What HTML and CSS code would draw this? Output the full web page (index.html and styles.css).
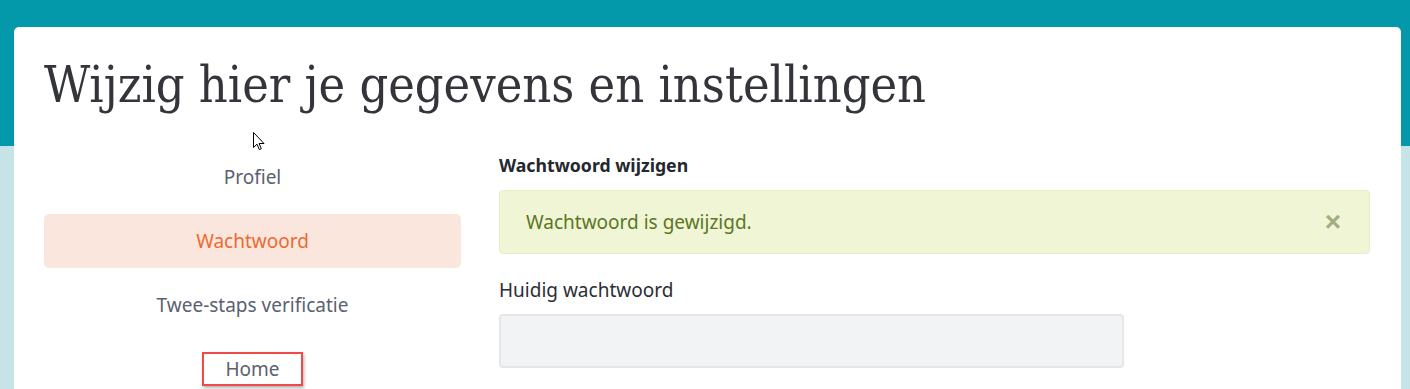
FILE: index.html
```html
<!DOCTYPE html>
<html lang="nl">
<head>
    <meta charset="UTF-8">
    <meta name="viewport" content="width=device-width, initial-scale=1.0">
    <title>Gegevens en instellingen</title>
    <link rel="stylesheet" href="styles.css">
</head>
<body>
    <!-- Kaart met instellingen -->
    <div class="card">
        <h1 class="title">Wijzig hier je gegevens en instellingen</h1>

        <div class="settings">
            <!-- Menu links -->
            <nav class="side-nav">
                <a href="#" class="nav-item">Profiel</a>
                <a href="#" class="nav-item active">Wachtwoord</a>
                <a href="#" class="nav-item">Twee-staps verificatie</a>
                <a href="#" class="nav-item"><span class="marked">Home</span></a>
            </nav>

            <!-- Formulier rechts -->
            <div class="panel">
                <h2 class="panel-title">Wachtwoord wijzigen</h2>
                <div class="alert">
                    <span>Wachtwoord is gewijzigd.</span>
                    <button class="alert-close">&times;</button>
                </div>
                <label class="field-label" for="huidig">Huidig wachtwoord</label>
                <input type="password" id="huidig" class="field-input">
            </div>
        </div>
    </div>

    <!-- Muiscursor -->
    <svg class="cursor" width="12" height="19" viewBox="0 0 12 19">
        <path d="M0.5 0.5 L0.5 15.5 L4 12.2 L6.3 17.6 L8.3 16.7 L6.1 11.5 L11 11.5 Z" fill="#fff" stroke="#000" stroke-width="1"/>
    </svg>
</body>
</html>
```

FILE: styles.css
```css
body {
    margin: 0;
    padding: 0;
    font-family: "Noto Sans", Arial, sans-serif;
    background: linear-gradient(to bottom, #0399aa 0, #0399aa 146px, #c6e3e8 146px);
    min-height: 389px;
    overflow: hidden;
}

.card {
    background-color: white;
    margin: 27px 9px 0 14px;
    padding: 25px 31px 40px 30px;
    border-radius: 5px 5px 0 0;
    min-height: 400px;
}

.title {
    font-family: "DejaVu Serif", "Liberation Serif", serif;
    font-weight: normal;
    font-stretch: condensed;
    font-size: 50px;
    line-height: 67px;
    color: #33353b;
    margin: 0 0 31px 0;
}

.settings {
    display: grid;
    grid-template-columns: 417px 1fr;
    gap: 38px;
}

/* Menu links */
.side-nav {
    display: flex;
    flex-direction: column;
    gap: 10px;
}

.nav-item {
    height: 54px;
    display: flex;
    align-items: center;
    justify-content: center;
    border-radius: 5px;
    color: #5a6170;
    font-size: 19px;
    text-decoration: none;
}

.nav-item.active {
    background-color: #fbe6dd;
    color: #ec6a33;
}

.marked {
    border: 2px solid #f24848;
    padding: 0 21px;
    line-height: 30px;
    box-shadow: 1px 2px 3px rgba(0, 0, 0, 0.3);
}

/* Formulier rechts */
.panel-title {
    font-size: 17.7px;
    font-weight: bold;
    color: #24272d;
    line-height: 30px;
    margin: 0 0 10px 0;
}

.alert {
    display: flex;
    align-items: center;
    justify-content: space-between;
    height: 62px;
    padding: 0 26px;
    background-color: #f0f5d6;
    border: 1px solid #e6efc4;
    border-radius: 4px;
    color: #5b7523;
    font-size: 19px;
}

.alert-close {
    background: none;
    border: none;
    color: #a3ad7e;
    font-size: 28px;
    font-weight: bold;
    padding: 0;
    margin-right: 2px;
    cursor: pointer;
}

.field-label {
    display: block;
    margin-top: 22px;
    font-size: 19px;
    color: #2b2e34;
    line-height: 28px;
}

.field-input {
    display: block;
    box-sizing: border-box;
    width: 625px;
    height: 54px;
    margin-top: 10px;
    background-color: #f2f3f5;
    border: 2px solid #e4e6ea;
    border-radius: 4px;
}

.cursor {
    position: absolute;
    left: 253px;
    top: 132px;
}
```
